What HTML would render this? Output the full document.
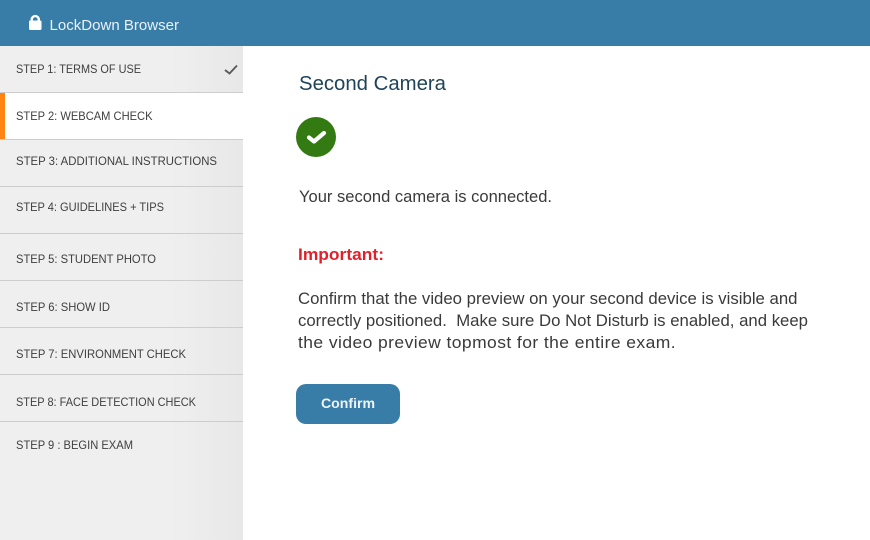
<!DOCTYPE html>
<html>
<head>
<meta charset="utf-8">
<style>
html,body{margin:0;padding:0;background:#fff}
svg{display:block}
text{font-family:"Liberation Sans",sans-serif;white-space:pre}
.s{font-size:12px;fill:#3f3f3f}
.b{font-size:16.5px;fill:#3a3a3a}
</style>
</head>
<body>
<svg width="870" height="540" viewBox="0 0 870 540" xmlns="http://www.w3.org/2000/svg">
<defs>
<linearGradient id="g" x1="0" x2="1" y1="0" y2="0">
<stop offset="0" stop-color="#efefef"/>
<stop offset="0.7" stop-color="#efefef"/>
<stop offset="1" stop-color="#e8e8e8"/>
</linearGradient>
</defs>
<rect width="870" height="540" fill="#fff"/>
<rect x="0" y="46" width="243" height="494" fill="url(#g)"/>
<rect x="0" y="93" width="243" height="46" fill="#fff"/>
<rect x="0" y="93" width="5" height="46" fill="#ff8412"/>
<g fill="#cdcdcd">
<rect x="0" y="92" width="243" height="1"/>
<rect x="0" y="139" width="243" height="1"/>
<rect x="0" y="186" width="243" height="1"/>
<rect x="0" y="233" width="243" height="1"/>
<rect x="0" y="280" width="243" height="1"/>
<rect x="0" y="327" width="243" height="1"/>
<rect x="0" y="374" width="243" height="1"/>
<rect x="0" y="421" width="243" height="1"/>
</g>
<rect width="870" height="46" fill="#387ca8"/>
<rect x="29" y="20.5" width="12.5" height="9.5" rx="1.2" fill="#fff"/>
<path d="M31.7 22V19.6a3.55 3.55 0 0 1 7.1 0V22" fill="none" stroke="#fff" stroke-width="2.4"/>
<text x="49.5" y="30" font-size="14.5" fill="#e9f1f6" textLength="129.5" lengthAdjust="spacingAndGlyphs">LockDown Browser</text>

<text class="s" x="16" y="73" textLength="125" lengthAdjust="spacingAndGlyphs">STEP 1: TERMS OF USE</text>
<text class="s" x="16" y="120" textLength="136.5" lengthAdjust="spacingAndGlyphs">STEP 2: WEBCAM CHECK</text>
<text class="s" x="16" y="165" textLength="201" lengthAdjust="spacingAndGlyphs">STEP 3: ADDITIONAL INSTRUCTIONS</text>
<text class="s" x="16" y="211" textLength="148" lengthAdjust="spacingAndGlyphs">STEP 4: GUIDELINES + TIPS</text>
<text class="s" x="16" y="263" textLength="140" lengthAdjust="spacingAndGlyphs">STEP 5: STUDENT PHOTO</text>
<text class="s" x="16" y="311" textLength="94" lengthAdjust="spacingAndGlyphs">STEP 6: SHOW ID</text>
<text class="s" x="16" y="358" textLength="170" lengthAdjust="spacingAndGlyphs">STEP 7: ENVIRONMENT CHECK</text>
<text class="s" x="16" y="406" textLength="180" lengthAdjust="spacingAndGlyphs">STEP 8: FACE DETECTION CHECK</text>
<text class="s" x="16" y="449" textLength="117" lengthAdjust="spacingAndGlyphs">STEP 9 : BEGIN EXAM</text>
<path d="M225 70L229.5 73.5L237 65.5" fill="none" stroke="#5a5a5a" stroke-width="1.9"/>

<text x="299" y="90" font-size="20" fill="#1f4358" textLength="147" lengthAdjust="spacingAndGlyphs">Second Camera</text>
<circle cx="316" cy="137" r="20" fill="#347a12"/>
<path d="M309 137.5L314 141.5L324 133" fill="none" stroke="#fff" stroke-width="4.2" stroke-linecap="round" stroke-linejoin="round"/>
<text class="b" x="299" y="202" textLength="253" lengthAdjust="spacingAndGlyphs">Your second camera is connected.</text>
<text x="298" y="260" font-size="16.5" font-weight="700" fill="#e0202a" textLength="86" lengthAdjust="spacingAndGlyphs">Important:</text>
<text class="b" x="298" y="304" textLength="499.5" lengthAdjust="spacingAndGlyphs">Confirm that the video preview on your second device is visible and</text>
<text class="b" x="298" y="326" textLength="510" lengthAdjust="spacingAndGlyphs">correctly positioned.  Make sure Do Not Disturb is enabled, and keep</text>
<text class="b" x="298" y="348" style="letter-spacing:.4px" textLength="378" lengthAdjust="spacingAndGlyphs">the video preview topmost for the entire exam.</text>
<rect x="296" y="384" width="104" height="40" rx="10" fill="#387ca8"/>
<text x="321" y="408" font-size="13.5" font-weight="700" fill="#eef4f8" textLength="54" lengthAdjust="spacingAndGlyphs">Confirm</text>
</svg>
</body>
</html>
